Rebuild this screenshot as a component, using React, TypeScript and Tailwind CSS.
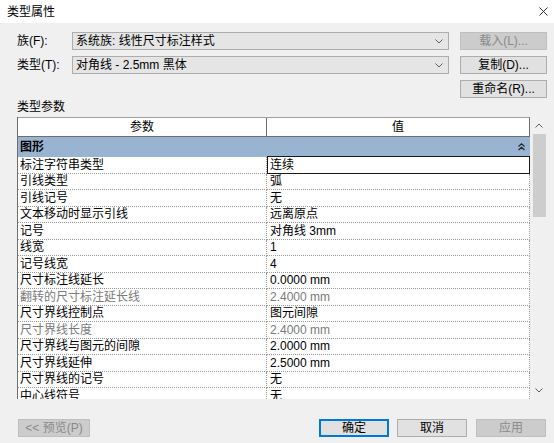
import React from "react";

type Row = { k: string; v: string; gray?: boolean };

const rows: Row[] = [
  { k: "标注字符串类型", v: "连续" },
  { k: "引线类型", v: "弧" },
  { k: "引线记号", v: "无" },
  { k: "文本移动时显示引线", v: "远离原点" },
  { k: "记号", v: "对角线 3mm" },
  { k: "线宽", v: "1" },
  { k: "记号线宽", v: "4" },
  { k: "尺寸标注线延长", v: "0.0000 mm" },
  { k: "翻转的尺寸标注延长线", v: "2.4000 mm", gray: true },
  { k: "尺寸界线控制点", v: "图元间隙" },
  { k: "尺寸界线长度", v: "2.4000 mm", gray: true },
  { k: "尺寸界线与图元的间隙", v: "2.0000 mm" },
  { k: "尺寸界线延伸", v: "2.5000 mm" },
  { k: "尺寸界线的记号", v: "无" },
  { k: "中心线符号", v: "无" },
];

function ChevronDown({ className = "" }: { className?: string }) {
  return (
    <svg width="8" height="5" viewBox="0 0 8 5" className={className}>
      <path d="M0.5 0.5 L4 4 L7.5 0.5" fill="none" stroke="#606060" strokeWidth="1" />
    </svg>
  );
}

function ChevronUp({ className = "" }: { className?: string }) {
  return (
    <svg width="8" height="5" viewBox="0 0 8 5" className={className}>
      <path d="M0.5 4.5 L4 1 L7.5 4.5" fill="none" stroke="#606060" strokeWidth="1" />
    </svg>
  );
}

function Combo({ text }: { text: string }) {
  return (
    <div className="w-[377px] h-[18px] bg-[#e5e5e5] border border-[#adadad] flex items-center justify-between pl-[3px] pr-[5px]">
      <span className="text-[12px] leading-none text-black">{text}</span>
      <ChevronDown />
    </div>
  );
}

function Btn({
  text,
  w = "w-[87px]",
  disabled = false,
  primary = false,
}: {
  text: string;
  w?: string;
  disabled?: boolean;
  primary?: boolean;
}) {
  const base = `${w} h-[18px] flex items-center justify-center text-[12px] leading-none`;
  if (disabled)
    return <div className={`${base} bg-[#cccccc] border border-[#bfbfbf] text-[#8a8a8a]`}>{text}</div>;
  if (primary)
    return (
      <div className={`${base} bg-[#e1e1e1] border-2 border-[#0078d7] text-black`}>{text}</div>
    );
  return <div className={`${base} bg-[#e1e1e1] border border-[#adadad] text-black`}>{text}</div>;
}

export default function App() {
  return (
    <div className="w-[554px] h-[443px] bg-[#f0f0f0] flex flex-col overflow-hidden font-['Liberation_Sans','Noto_Sans_CJK_SC',sans-serif] text-black">
      {/* title bar */}
      <div className="h-[23px] bg-white flex items-center justify-between pl-[7px] pr-[6px] shrink-0">
        <span className="text-[12px] leading-none">类型属性</span>
        <svg width="9" height="9" viewBox="0 0 9 9">
          <path d="M0.5 0.5 L8.5 8.5 M8.5 0.5 L0.5 8.5" stroke="#333" strokeWidth="1" fill="none" />
        </svg>
      </div>

      <div className="flex flex-col pl-[17px] pr-[7px] pt-[9px]">
        {/* row 1 */}
        <div className="flex items-center h-[18px]">
          <div className="w-[55px] text-[12px] leading-none">族(F):</div>
          <Combo text="系统族: 线性尺寸标注样式" />
          <div className="ml-[11px]">
            <Btn text="载入(L)..." disabled />
          </div>
        </div>
        {/* row 2 */}
        <div className="flex items-center h-[18px] mt-[6px]">
          <div className="w-[55px] text-[12px] leading-none">类型(T):</div>
          <Combo text="对角线 - 2.5mm 黑体" />
          <div className="ml-[11px]">
            <Btn text="复制(D)..." />
          </div>
        </div>
        {/* row 3 */}
        <div className="flex items-center justify-end h-[18px] mt-[6px]">
          <Btn text="重命名(R)..." />
        </div>

        <div className="mt-[2px] h-[14px] flex items-center text-[12px] leading-none">类型参数</div>

        {/* table */}
        <div className="mt-[3px] h-[282px] w-[531px] flex">
          <div className="w-[513px] h-full overflow-hidden border-l border-[#6e6e6e] bg-white flex flex-col">
            {/* header */}
            <div className="h-[20px] shrink-0 flex border-t border-b border-r border-t-[#a0a0a0] border-b-[#6e6e6e] border-r-[#6e6e6e] bg-white">
              <div className="w-[249px] border-r border-[#6e6e6e] flex items-center justify-center text-[12px] leading-none">
                参数
              </div>
              <div className="flex-1 flex items-center justify-center text-[12px] leading-none">值</div>
            </div>
            {/* group */}
            <div className="h-[20px] shrink-0 bg-[#99b4d1] flex items-center justify-between pl-[2px] pr-[5px]">
              <span className="text-[12px] leading-none font-bold">图形</span>
              <svg width="7" height="8" viewBox="0 0 7 8">
                <path d="M0.5 3.5 L3.5 0.8 L6.5 3.5 M0.5 7 L3.5 4.3 L6.5 7" fill="none" stroke="#222" strokeWidth="1.1" />
              </svg>
            </div>
            {rows.map((r, i) => (
              <div key={i} className="h-[16.5px] shrink-0 flex">
                <div
                  className={`w-[249px] border-b border-r border-dotted border-[#9a9a9a] flex items-center pl-[2px] text-[12px] leading-none ${
                    r.gray ? "text-[#7a7a7a]" : "text-black"
                  }`}
                >
                  {r.k}
                </div>
                {i === 0 ? (
                  <div className="flex-1 border border-[#1a1a1a] -mt-px flex items-center pl-[2px] text-[12px] leading-none">
                    {r.v}
                  </div>
                ) : (
                  <div
                    className={`flex-1 border-b border-r border-dotted border-[#9a9a9a] flex items-center pl-[3px] text-[12px] leading-none ${
                      r.gray ? "text-[#7a7a7a]" : "text-black"
                    }`}
                  >
                    {r.v}
                  </div>
                )}
              </div>
            ))}
          </div>
          {/* scrollbar */}
          <div className="w-[18px] h-full bg-[#f0f0f0] flex flex-col items-center">
            <div className="h-[17px] w-full flex items-center justify-center">
              <ChevronUp />
            </div>
            <div className="w-[13px] h-[83px] bg-[#cdcdcd]" />
            <div className="flex-1" />
            <div className="h-[17px] w-full flex items-center justify-center">
              <ChevronDown />
            </div>
          </div>
        </div>

        {/* bottom buttons */}
        <div className="mt-[20px] flex items-center h-[18px]">
          <div className="ml-px">
            <Btn text="<< 预览(P)" w="w-[72px]" disabled />
          </div>
          <div className="flex-1" />
          <Btn text="确定" w="w-[70px]" primary />
          <div className="ml-[8px]">
            <Btn text="取消" w="w-[70px]" />
          </div>
          <div className="ml-[9px]">
            <Btn text="应用" w="w-[70px]" disabled />
          </div>
          <div className="w-px" />
        </div>
      </div>
    </div>
  );
}
